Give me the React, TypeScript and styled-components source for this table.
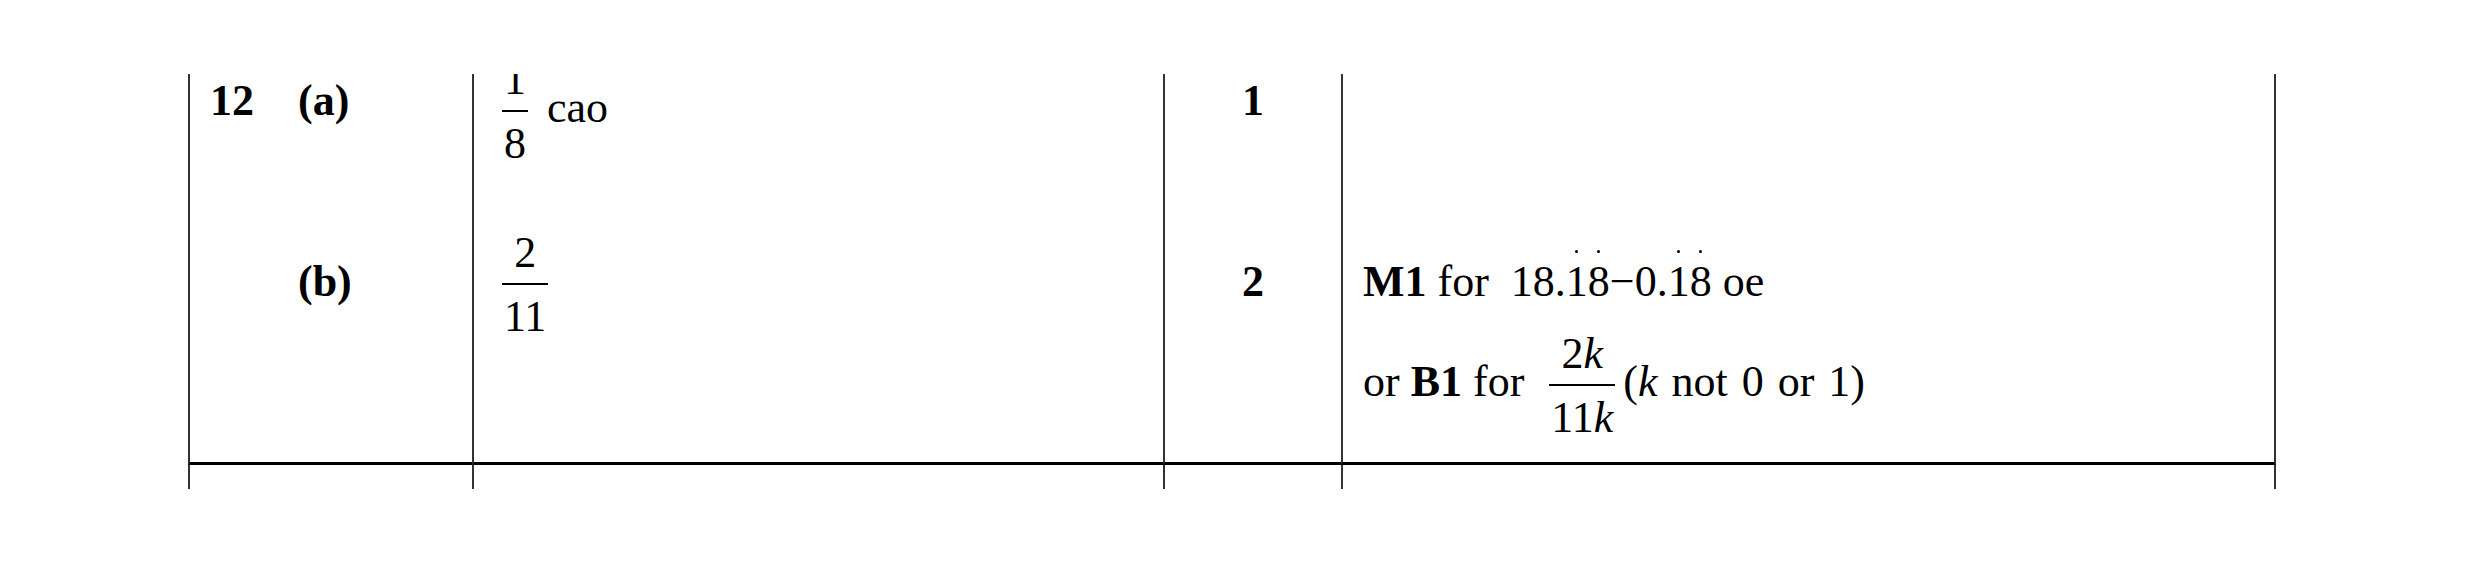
import React from "react";
import styled, { createGlobalStyle } from "styled-components";

const GlobalStyle = createGlobalStyle`
  html, body {
    margin: 0;
    padding: 0;
    background: #ffffff;
  }
  body {
    font-family: "Liberation Serif", "Times New Roman", serif;
    color: #000000;
  }
`;

const Page = styled.div`
  width: 2480px;
  height: 565px;
  box-sizing: border-box;
  padding: 74px 0 0 188px;
`;

// the picture is a slice of a longer mark scheme, so the table is cut at top and bottom
const Viewport = styled.div`
  height: 415px;
  overflow: hidden;
`;

const Table = styled.div`
  display: grid;
  grid-template-columns: 284px 691px 178px 935px;
  grid-template-rows: 140px 291px 24px;
  margin-top: -40px;
  font-size: 44px;
  line-height: 48px;
`;

const Cell = styled.div<{ $top?: number; $left?: number; $center?: boolean; $last?: boolean; $rule?: boolean }>`
  box-sizing: border-box;
  border-left: 2px solid #333333;
  ${(p) => (p.$last ? "border-right: 2px solid #333333;" : "")}
  ${(p) => (p.$rule ? "border-bottom: 3px solid #000000;" : "")}
  padding-top: ${(p) => p.$top ?? 0}px;
  padding-left: ${(p) => p.$left ?? 0}px;
  text-align: ${(p) => (p.$center ? "center" : "left")};
`;

const QuestionLabel = styled.div`
  display: flex;
  font-weight: bold;
`;

const QuestionNumber = styled.span`
  width: 88px;
`;

const Mark = styled.span`
  font-weight: bold;
`;

const Frac = styled.span<{ $before?: number; $after?: number }>`
  display: inline-flex;
  flex-direction: column;
  align-items: center;
  vertical-align: middle;
  line-height: 1;
  margin-left: ${(p) => p.$before ?? 0}px;
  margin-right: ${(p) => p.$after ?? 0}px;
`;

const Numerator = styled.span`
  padding: 0 2px;
  margin-bottom: 8px;
`;

const Bar = styled.span`
  align-self: stretch;
  height: 2px;
  background: #000000;
`;

const Denominator = styled.span`
  padding: 0 2px;
  margin-top: 10px;
`;

const Var = styled.i`
  font-style: italic;
`;

const Recur = styled.span`
  position: relative;

  &::after {
    content: "";
    position: absolute;
    left: 50%;
    top: -7px;
    width: 3px;
    height: 3px;
    margin-left: -1.5px;
    border-radius: 50%;
    background: #000000;
  }
`;

const Expr = styled.span`
  margin-left: 22px;
`;

const Condition = styled.span`
  word-spacing: 3px;
`;

const NoteLine = styled.div<{ $gap?: number }>`
  margin-top: ${(p) => p.$gap ?? 0}px;
`;

function Fraction({ num, den, before, after }: { num: React.ReactNode; den: React.ReactNode; before?: number; after?: number }) {
  return (
    <Frac $before={before} $after={after}>
      <Numerator>{num}</Numerator>
      <Bar />
      <Denominator>{den}</Denominator>
    </Frac>
  );
}

export default function App() {
  return (
    <Page>
      <GlobalStyle />
      <Viewport>
        <Table>
          {/* part (a) */}
          <Cell $top={43} $left={20}>
            <QuestionLabel>
              <QuestionNumber>12</QuestionNumber>
              <span>(a)</span>
            </QuestionLabel>
          </Cell>
          <Cell $top={24} $left={28}>
            <Fraction num="1" den="8" after={8} /> cao
          </Cell>
          <Cell $top={43} $center>
            <Mark>1</Mark>
          </Cell>
          <Cell $last />

          {/* part (b) */}
          <Cell $top={84} $left={20} $rule>
            <QuestionLabel>
              <QuestionNumber />
              <span>(b)</span>
            </QuestionLabel>
          </Cell>
          <Cell $top={57} $left={28} $rule>
            <Fraction num="2" den="11" />
          </Cell>
          <Cell $top={84} $center $rule>
            <Mark>2</Mark>
          </Cell>
          <Cell $top={84} $left={20} $last $rule>
            <NoteLine>
              <Mark>M1</Mark> for
              <Expr>
                18.<Recur>1</Recur>
                <Recur>8</Recur>−0.<Recur>1</Recur>
                <Recur>8</Recur>
              </Expr>{" "}
              oe
            </NoteLine>
            <NoteLine $gap={26}>
              or <Mark>B1</Mark> for
              <Fraction
                before={25}
                after={8}
                num={
                  <>
                    2<Var>k</Var>
                  </>
                }
                den={
                  <>
                    11<Var>k</Var>
                  </>
                }
              />
              <Condition>
                (<Var>k</Var> not 0 or 1)
              </Condition>
            </NoteLine>
          </Cell>

          {/* start of the next row, cut off by the page */}
          <Cell />
          <Cell />
          <Cell />
          <Cell $last />
        </Table>
      </Viewport>
    </Page>
  );
}
